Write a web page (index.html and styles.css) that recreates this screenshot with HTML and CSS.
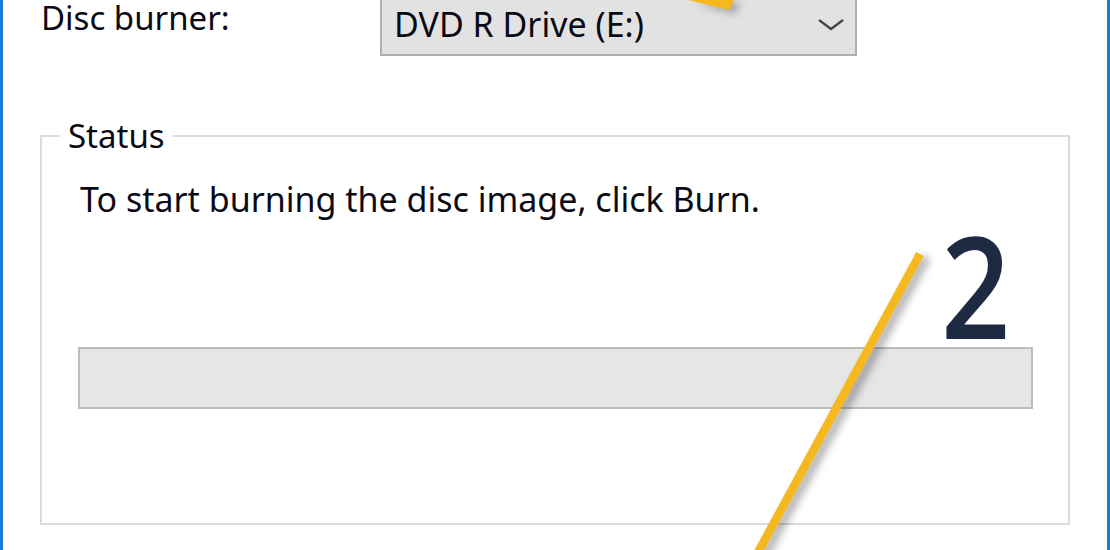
FILE: index.html
```html
<!DOCTYPE html>
<html>
<head>
<meta charset="utf-8">
<link rel="stylesheet" href="styles.css">
</head>
<body>
<div class="window">
  <div class="burner-row">
    <div class="label">Disc burner:</div>
    <div class="select">
      <span class="select-text">DVD R Drive (E:)</span>
      <svg class="chevron" width="26" height="12" viewBox="0 0 26 12"><path d="M1 1 L13 10 L25 1" fill="none" stroke="#444" stroke-width="2.2"/></svg>
    </div>
  </div>
  <fieldset class="group">
    <legend class="legend">Status</legend>
    <p class="status-text">To start burning the disc image, click Burn.</p>
    <div class="progress"></div>
  </fieldset>
  <div class="step-number">2</div>
  <svg class="annotation" width="1110" height="550" viewBox="0 0 1110 550">
    <path class="arrow-tip" d="M688 0 L734 0 L729 10 Z" fill="#f5b81f"/>
    <path class="pointer" d="M920 254 Q 850 382 756 556" fill="none" stroke="#f5b81f" stroke-width="8.5"/>
  </svg>
</div>
</body>
</html>
```
FILE: styles.css
```css
html, body {
  margin: 0;
  padding: 0;
  background: #ffffff;
}

.window {
  position: relative;
  width: 1110px;
  height: 550px;
  box-sizing: border-box;
  border-left: 3px solid #1a7dd4;
  border-right: 3px solid #1a7dd4;
  background: #ffffff;
  overflow: hidden;
  font-family: "Noto Sans", "Open Sans", sans-serif;
  color: #0a0a14;
}

.burner-row {
  display: flex;
  align-items: flex-start;
  padding-left: 38px;
  height: 56px;
}

.label {
  width: 339px;
  font-size: 33px;
  line-height: 36px;
}

.select {
  box-sizing: border-box;
  width: 477px;
  height: 72px;
  margin-top: -16px;
  border: 2px solid #b0b0b0;
  background: #e2e2e2;
  display: flex;
  align-items: flex-end;
  justify-content: space-between;
  padding: 0 11px 10px 12px;
}

.select-text {
  font-size: 34px;
  line-height: 40px;
}

.chevron {
  margin-bottom: 13px;
}

.group {
  box-sizing: border-box;
  margin: 60px 0 0 37px;
  width: 1030px;
  height: 409px;
  border: 2px solid #dcdcdc;
  padding: 0 34px 0 36px;
}

.legend {
  font-size: 33px;
  line-height: 40px;
  padding: 0 8px;
  margin-left: -18px;
}

.status-text {
  margin: 23px 0 0 2px;
  font-size: 34px;
  line-height: 40px;
}

.progress {
  box-sizing: border-box;
  margin-top: 128px;
  width: 955px;
  height: 62px;
  border: 2px solid #bdbdbd;
  background: #e6e6e6;
}

.step-number {
  position: absolute;
  left: 938px;
  top: 206px;
  font-family: "Open Sans", "Noto Sans", sans-serif;
  font-weight: 600;
  font-size: 141px;
  line-height: 156px;
  color: #1e2a42;
  transform: scaleX(0.86);
  transform-origin: left top;
}

.annotation {
  position: absolute;
  left: -3px;
  top: 0;
  pointer-events: none;
}

.pointer, .arrow-tip {
  filter: drop-shadow(6px 3px 4px rgba(0, 0, 0, 0.35));
}
```
